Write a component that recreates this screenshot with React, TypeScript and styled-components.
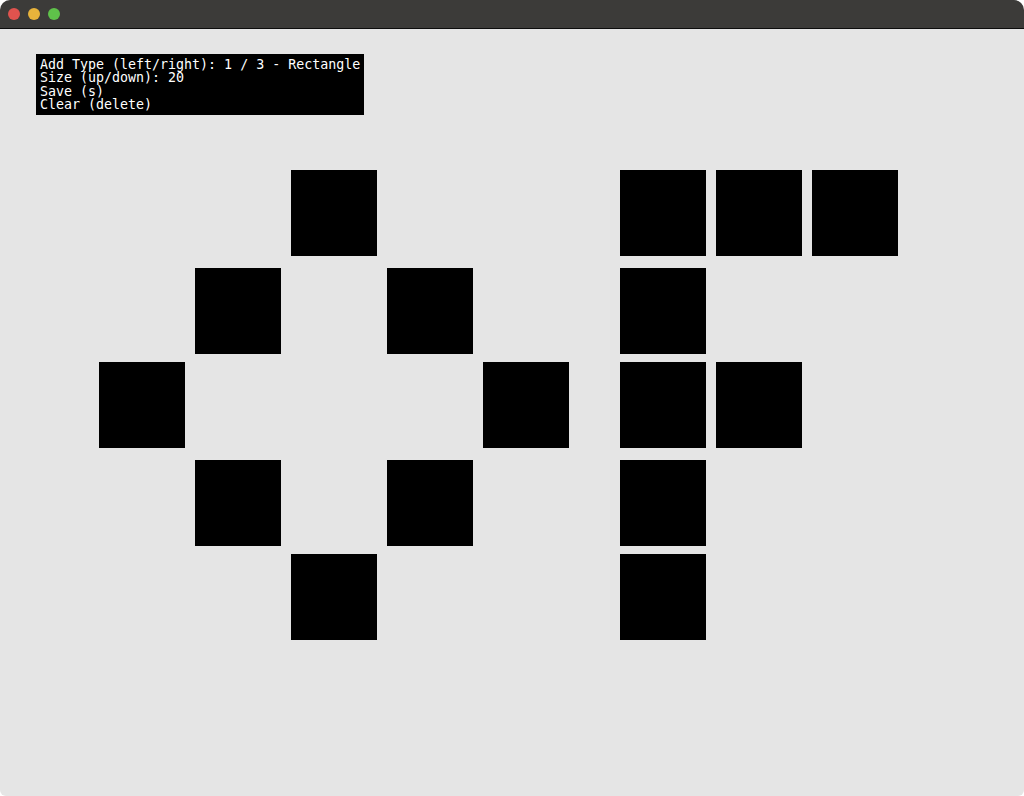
import React from "react";
import styled, { createGlobalStyle } from "styled-components";

const Global = createGlobalStyle`
  html, body { margin: 0; padding: 0; background: #ffffff; }
  #root { width: 1024px; height: 796px; }
`;

const Window = styled.div`
  width: 1024px;
  height: 796px;
  display: flex;
  flex-direction: column;
  background: #e5e5e5;
  border-radius: 10px 10px 6px 6px;
  overflow: hidden;
`;

const TitleBar = styled.div`
  height: 28px;
  flex: 0 0 28px;
  background: #3c3b39;
  border-bottom: 1px solid #0d0d0d;
  display: flex;
  align-items: center;
  gap: 8px;
  padding-left: 8px;
`;

const Light = styled.span<{ $color: string }>`
  width: 12px;
  height: 12px;
  border-radius: 50%;
  background: ${(p) => p.$color};
`;

const Canvas = styled.div`
  position: relative;
  flex: 1;
`;

const Hud = styled.div`
  position: absolute;
  left: 36px;
  top: 25px;
  width: 320px;
  padding: 4px;
  background: #000;
  color: #fff;
  font-family: "DejaVu Sans Mono", "Liberation Mono", monospace;
  font-size: 13.3px;
  line-height: 13.33px;
  white-space: pre;
`;

const Square = styled.div`
  position: absolute;
  width: 86px;
  height: 86px;
  background: #000;
`;

const TOP = 29;
const squares: [number, number][] = [
  // diamond
  [291, 170],
  [195, 268],
  [387, 268],
  [99, 362],
  [483, 362],
  [195, 460],
  [387, 460],
  [291, 554],
  // F shape
  [620, 170],
  [716, 170],
  [812, 170],
  [620, 268],
  [620, 362],
  [716, 362],
  [620, 460],
  [620, 554],
];

export default function App() {
  return (
    <>
      <Global />
      <Window>
        <TitleBar>
          <Light $color="#e0534e" />
          <Light $color="#e8b33b" />
          <Light $color="#5fc24a" />
        </TitleBar>
        <Canvas>
          {squares.map(([x, y], i) => (
            <Square key={i} style={{ left: x, top: y - TOP }} />
          ))}
          <Hud>
            {"Add Type (left/right): 1 / 3 - Rectangle\nSize (up/down): 20\nSave (s)\nClear (delete)"}
          </Hud>
        </Canvas>
      </Window>
    </>
  );
}
